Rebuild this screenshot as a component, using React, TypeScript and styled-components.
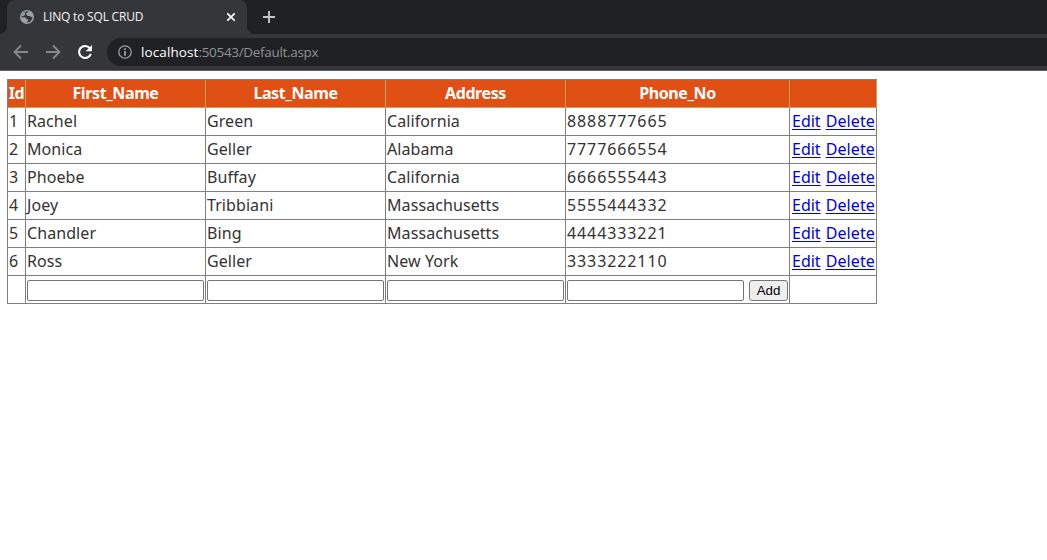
import React from "react";
import styled, { createGlobalStyle } from "styled-components";

const GlobalStyle = createGlobalStyle`
  * { box-sizing: border-box; }
  body { margin: 0; background: #fff; overflow: hidden; }
`;

const Window = styled.div`
  width: 1047px;
  height: 560px;
  background: #fff;
  font-family: "Open Sans", "Noto Sans", sans-serif;
`;

const TabStrip = styled.div`
  height: 34px;
  background: #202124;
  display: flex;
  align-items: stretch;
`;

const Flare = styled.div<{ $side: "left" | "right" }>`
  width: 7px;
  background: radial-gradient(
    circle at ${(p) => (p.$side === "left" ? "0 0" : "100% 0")},
    #202124 6.6px,
    #35363a 7.2px
  );
  height: 7px;
  align-self: flex-end;
`;

const Tab = styled.div`
  width: 240px;
  background: #35363a;
  border-radius: 8px 8px 0 0;
  display: flex;
  align-items: center;
  padding: 0 10px 0 13px;
`;

const TabTitle = styled.span`
  flex: 1;
  margin-left: 9px;
  color: #f4f5f6;
  font-size: 12px;
  line-height: 16px;
  letter-spacing: -0.2px;
  white-space: nowrap;
`;

const NewTab = styled.div`
  display: flex;
  align-items: center;
  margin-left: 8px;
`;

const Toolbar = styled.div`
  height: 37px;
  background: #35363a;
  border-bottom: 1px solid #5f5f64;
  display: flex;
  align-items: center;
  padding-left: 13px;
`;

const NavIcon = styled.svg`
  flex: none;
  width: 16px;
  height: 16px;
  margin-right: 16px;
`;

const Omnibox = styled.div`
  flex: 1;
  height: 28px;
  margin-left: -2px;
  background: #202124;
  border-radius: 14px 0 0 14px;
  display: flex;
  align-items: center;
  padding-left: 11px;
`;

const Url = styled.div`
  margin-left: 9px;
  color: #8d9196;
  font-size: 13.5px;
  line-height: 20px;
  letter-spacing: -0.32px;
  white-space: nowrap;
`;

const Host = styled.span`
  color: #fff;
  letter-spacing: 0.1px;
`;

const Grid = styled.div`
  display: inline-grid;
  grid-template-columns: 18px 180px 180px 180px 224px 87px;
  grid-auto-rows: 28px;
  margin: 8px 0 0 7px;
  border-top: 1px solid #808080;
  border-left: 1px solid #808080;
`;

const Cell = styled.div<{ $numeric?: boolean }>`
  display: flex;
  align-items: center;
  padding: 0 1px 1px;
  border-right: 1px solid #808080;
  border-bottom: 1px solid #808080;
  color: #333;
  font-family: "Noto Sans", sans-serif;
  font-size: 16px;
  line-height: 20px;
  letter-spacing: ${(p) => (p.$numeric ? "0.9px" : "0.08px")};
  white-space: nowrap;
`;

const HeaderCell = styled(Cell)`
  justify-content: center;
  background: #e04f14;
  border-color: #c0a060;
  color: #fff;
  font-weight: 700;
  letter-spacing: -0.4px;
`;

const FormCell = styled(Cell)`
  padding: 1px 1px 0;
`;

const CommandLink = styled.a`
  color: #0000ee;
  text-decoration: underline;
  text-underline-offset: 2px;
  letter-spacing: 0;

  & + & {
    margin-left: 5px;
    letter-spacing: 0.1px;
  }
`;

const CommandCell = styled(Cell)`
  padding-left: 2px;
`;

const TextBox = styled.input`
  width: 177px;
  height: 21px;
  margin: 0;
  border: 1px solid #767676;
  border-radius: 2px;
  padding: 1px 2px;
  background: #fff;
`;

const AddButton = styled.button`
  width: 39px;
  height: 21px;
  margin: 0 0 0 5px;
  padding: 0;
  border: 1px solid #767676;
  border-radius: 3px;
  background: #efefef;
  color: #000;
  font: 13.33px/17px "Liberation Sans", Arial, sans-serif;
`;

const headers = ["Id", "First_Name", "Last_Name", "Address", "Phone_No", ""];
const people = [
  ["1", "Rachel", "Green", "California", "8888777665"],
  ["2", "Monica", "Geller", "Alabama", "7777666554"],
  ["3", "Phoebe", "Buffay", "California", "6666555443"],
  ["4", "Joey", "Tribbiani", "Massachusetts", "5555444332"],
  ["5", "Chandler", "Bing", "Massachusetts", "4444333221"],
  ["6", "Ross", "Geller", "New York", "3333222110"],
];

export default function App() {
  return (
    <Window>
      <GlobalStyle />
      <TabStrip>
        <Flare $side="left" />
        <Tab>
          <svg width="14" height="14" viewBox="0 0 14 14">
            <circle cx="7" cy="7" r="7" fill="#9aa0a6" />
            <path d="M8.300 1.500c.2 1.200-2.300.9-2.300 2.200 0 .9 1 .6 1.200 1.700.2 1.300 1.600.2 2.600.7 1 .5 1.300 1.300 2.700 1a5.600 5.600 0 0 1-5.600 5.400c-.3-1.100 1.500-1.300 1.400-2.400-.1-1-1.700-.7-2.200-1.900C5.600 7 4.300 7.200 1.400 7.200a5.600 5.600 0 0 1 6.900-5.700Z" fill="#35363a" />
            <path d="M1.500 6.300C2 3.500 4.200 1.600 6.800 1.400 5.200 2.200 4.700 3 5 4.300c.2 1-1.100 1.900-3.500 2Z" fill="#9aa0a6" />
          </svg>
          <TabTitle>LINQ to SQL CRUD</TabTitle>
          <svg width="12" height="12" viewBox="0 0 12 12">
            <path d="m2.300 2.300 7.400 7.400m0-7.400-7.400 7.400" stroke="#fff" strokeWidth="1.700" />
          </svg>
        </Tab>
        <Flare $side="right" />
        <NewTab>
          <svg width="14" height="14" viewBox="0 0 14 14">
            <path d="M7 1v12M1 7h12" stroke="#c4c6c9" strokeWidth="1.900" />
          </svg>
        </NewTab>
      </TabStrip>
      <Toolbar>
        <NavIcon viewBox="0 0 16 16" fill="none" stroke="#87898d" strokeWidth="1.800">
          <path d="M15 8H2M8 1.500 1.500 8 8 14.500" />
        </NavIcon>
        <NavIcon viewBox="0 0 16 16" fill="none" stroke="#87898d" strokeWidth="1.800">
          <path d="M1 8h13M8 1.500 14.500 8 8 14.500" />
        </NavIcon>
        <NavIcon viewBox="0 0 16 16">
          <path d="M12.800 4.200A6 6 0 1 0 13.800 9.800" fill="none" stroke="#fff" strokeWidth="2.100" />
          <path d="M15 1v6.300H8.700Z" fill="#fff" />
        </NavIcon>
        <Omnibox>
          <svg width="14" height="14" viewBox="0 0 14 14">
            <circle cx="7" cy="7" r="6.200" fill="none" stroke="#9aa0a6" strokeWidth="1.300" />
            <path d="M7 3.300v1.600M7 6v4.700" stroke="#9aa0a6" strokeWidth="1.800" />
          </svg>
          <Url>
            <Host>localhost</Host>:50543/Default.aspx
          </Url>
        </Omnibox>
      </Toolbar>
      <Grid>
        {headers.map((h, i) => (
          <HeaderCell key={i}>{h}</HeaderCell>
        ))}
        {people.map((row) => (
          <React.Fragment key={row[0]}>
            {row.map((value, i) => (
              <Cell key={i} $numeric={i === 4}>{value}</Cell>
            ))}
            <CommandCell>
              <CommandLink>Edit</CommandLink>
              <CommandLink>Delete</CommandLink>
            </CommandCell>
          </React.Fragment>
        ))}
        <FormCell />
        <FormCell><TextBox /></FormCell>
        <FormCell><TextBox /></FormCell>
        <FormCell><TextBox /></FormCell>
        <FormCell>
          <TextBox />
          <AddButton>Add</AddButton>
        </FormCell>
        <FormCell />
      </Grid>
    </Window>
  );
}
